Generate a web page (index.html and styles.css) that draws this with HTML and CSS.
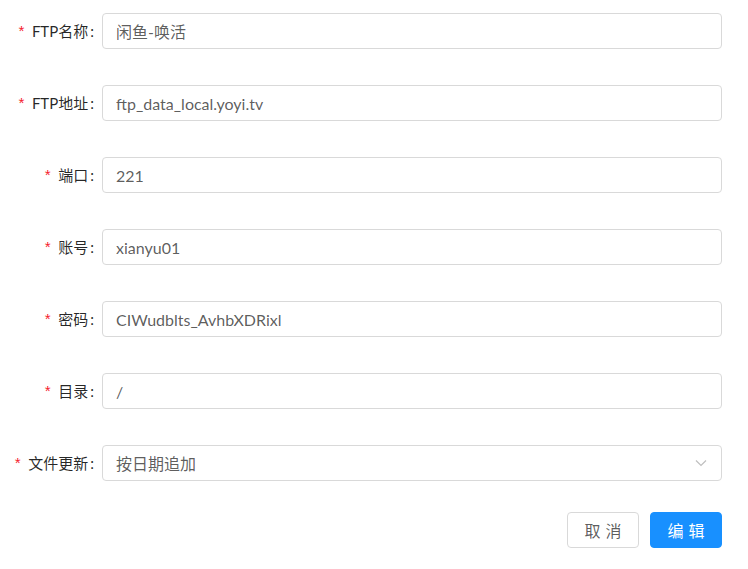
FILE: index.html
```html
<!DOCTYPE html>
<html lang="zh-CN">
<head>
    <meta charset="UTF-8">
    <meta name="viewport" content="width=device-width, initial-scale=1.0">
    <title>FTP 编辑</title>
    <link rel="stylesheet" href="styles.css">
</head>
<body>
    <form class="ftp-form">
        <div class="form-row">
            <label class="form-label required">FTP名称</label>
            <input class="form-input" type="text" value="闲鱼-唤活">
        </div>
        <div class="form-row">
            <label class="form-label required">FTP地址</label>
            <input class="form-input" type="text" value="ftp_data_local.yoyi.tv">
        </div>
        <div class="form-row">
            <label class="form-label required">端口</label>
            <input class="form-input" type="text" value="221">
        </div>
        <div class="form-row">
            <label class="form-label required">账号</label>
            <input class="form-input" type="text" value="xianyu01">
        </div>
        <div class="form-row">
            <label class="form-label required">密码</label>
            <input class="form-input" type="text" value="CIWudblts_AvhbXDRixl">
        </div>
        <div class="form-row">
            <label class="form-label required">目录</label>
            <input class="form-input" type="text" value="/">
        </div>
        <div class="form-row">
            <label class="form-label required">文件更新</label>
            <div class="form-select">
                <span class="select-value">按日期追加</span>
                <svg class="select-arrow" width="12" height="12" viewBox="0 0 12 12">
                    <path d="M1 3.5 L6 8.5 L11 3.5" fill="none" stroke="#bfbfbf" stroke-width="1.2"/>
                </svg>
            </div>
        </div>

        <!-- Footer buttons -->
        <div class="form-actions">
            <button type="button" class="btn">取消</button>
            <button type="button" class="btn btn-primary">编辑</button>
        </div>
    </form>
</body>
</html>
```

FILE: styles.css
```css
body {
    margin: 0;
    background-color: #fff;
    font-family: Lato, "Noto Sans CJK SC", sans-serif;
    font-size: 15px;
    color: rgba(0, 0, 0, 0.65);
}

.ftp-form {
    width: 722px;
    padding-top: 13px;
}

.form-row {
    display: grid;
    grid-template-columns: 102px 1fr;
    align-items: center;
    margin-bottom: 36px;
}

.form-label {
    text-align: right;
    padding-right: 8px;
    font-size: 15px;
    color: rgba(0, 0, 0, 0.85);
    white-space: nowrap;
}

.form-label::after {
    content: ":";
    margin-left: 2px;
}

.form-label.required::before {
    content: "*";
    color: #f5222d;
    margin-right: 6px;
    font-family: "Liberation Mono", monospace;
}

.form-input,
.form-select {
    box-sizing: border-box;
    height: 36px;
    width: 100%;
    padding: 4px 13px;
    border: 1px solid #d9d9d9;
    border-radius: 4px;
    background-color: #fff;
    font-family: inherit;
    font-size: 16px;
    color: rgba(0, 0, 0, 0.65);
    outline: none;
}

.form-select {
    display: flex;
    align-items: center;
    justify-content: space-between;
    padding-right: 14px;
}

.select-arrow {
    display: block;
}

.form-actions {
    display: flex;
    justify-content: flex-end;
    gap: 11px;
    margin-top: -5px;
}

.btn {
    box-sizing: border-box;
    width: 72px;
    height: 36px;
    border: 1px solid #d9d9d9;
    border-radius: 4px;
    background-color: #fff;
    color: rgba(0, 0, 0, 0.65);
    font-family: inherit;
    font-size: 16px;
    letter-spacing: 0.3em;
    text-indent: 0.3em;
    cursor: pointer;
}

.btn-primary {
    background-color: #1890ff;
    border-color: #1890ff;
    color: #fff;
}
```
